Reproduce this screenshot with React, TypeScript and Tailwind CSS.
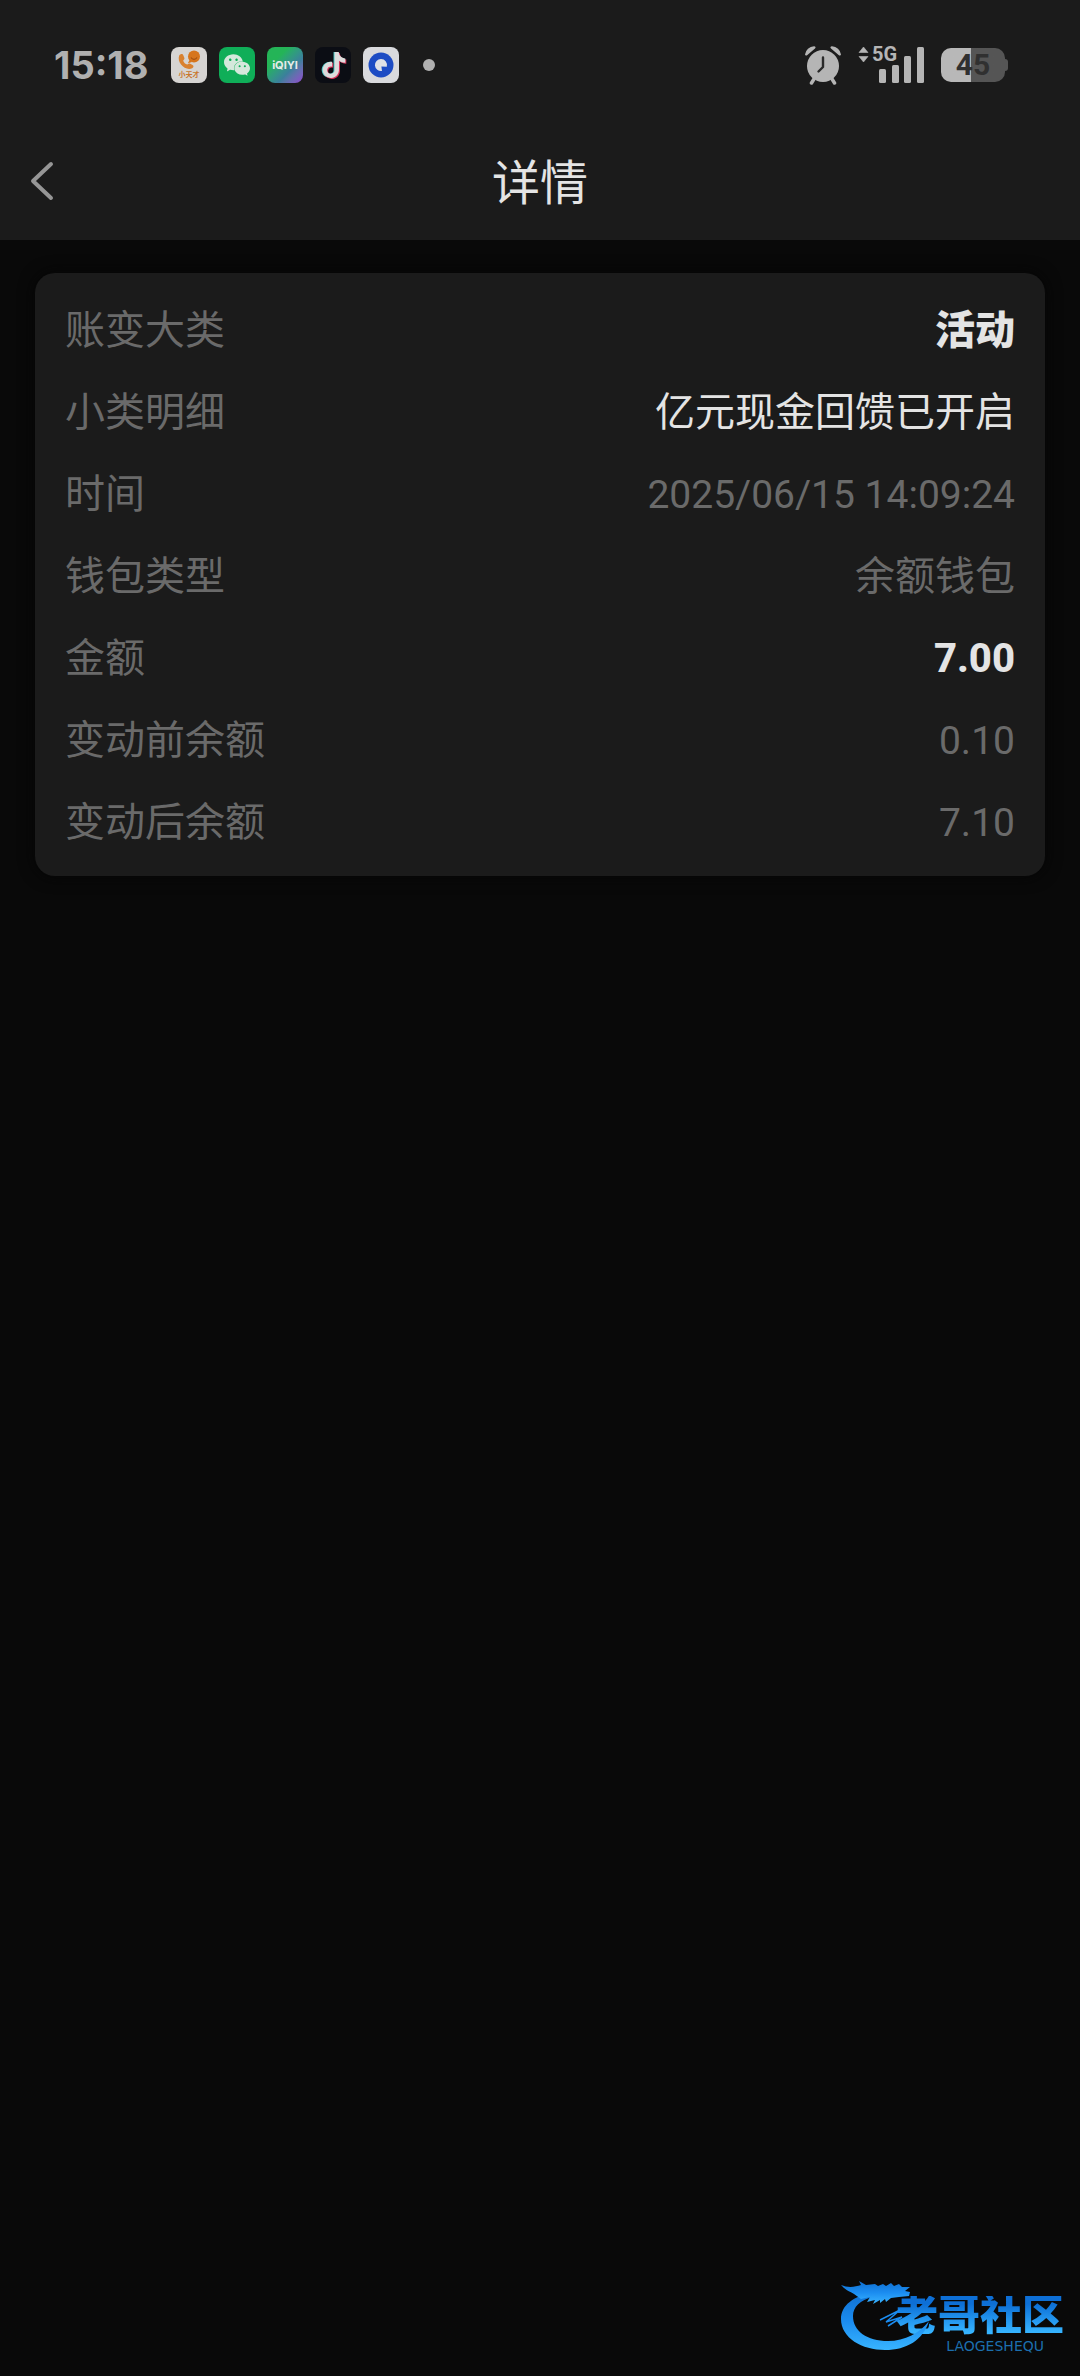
import { SiTiktok, SiWechat } from "react-icons/si";

type Row = { label: string; value: string; tone: string };

const muted = "text-[#6a6a6a]";
const rows: Row[] = [
  { label: "账变大类", value: "活动", tone: "font-black text-[#e4e4e4]" },
  { label: "小类明细", value: "亿元现金回馈已开启", tone: "text-[#e4e4e4]" },
  { label: "时间", value: "2025/06/15 14:09:24", tone: "text-[39px] text-[#6a6a6a]" },
  { label: "钱包类型", value: "余额钱包", tone: muted },
  { label: "金额", value: "7.00", tone: "font-extrabold text-[#e4e4e4]" },
  { label: "变动前余额", value: "0.10", tone: "text-[39px] text-[#6a6a6a]" },
  { label: "变动后余额", value: "7.10", tone: "text-[39px] text-[#6a6a6a]" },
];

function PhoneAppIcon() {
  return (
    <div className="relative size-9 overflow-hidden rounded-lg bg-[#d6d4d2]">
      <svg viewBox="0 0 36 36" className="size-9">
        <path
          d="M8.200 8.600c1.400-2 3.400-2 4.200-.2l1 2.600c.4 1.200-.8 1.900-1.200 2.700.6 1.900 2.200 3.400 4 3.900.9-.5 1.800-1.500 3-.9l2.400 1.300c1.400 1 1 2.400-.4 3.200-6.400 3.400-15.800-5.400-13-12.600z"
          fill="#d9812f"
        />
        <circle cx="23" cy="9.500" r="6" fill="#d6751c" />
        <path d="M18.600 13l-1.800 3.200 4.200-1.200z" fill="#d6751c" />
        <path d="M20 10.500c1.500 2.500 4.500 2.500 6 0" stroke="#a04f10" strokeWidth="1.200" fill="none" />
      </svg>
      <span className="absolute inset-x-0 bottom-1 text-center text-[7px] leading-[8px] font-bold text-[#c9762c]">
        小天才
      </span>
    </div>
  );
}

function TikTokIcon() {
  return (
    <div className="relative size-9 rounded-lg bg-[#0b0d14]">
      <SiTiktok className="absolute top-[5px] left-[5px] size-[26px] text-[#4fc9c6]" />
      <SiTiktok className="absolute top-[6px] left-[7px] size-[26px] text-[#d8345c]" />
      <SiTiktok className="absolute top-[5px] left-[6px] size-[26px] text-[#dcdcdc]" />
    </div>
  );
}

function AlarmIcon() {
  return (
    <svg viewBox="0 0 38 40" className="h-10 w-[38px]">
      <g fill="#b5b5b5">
        <path d="M1 9.500A9.500 9.500 0 0 1 10 1.200c1.800.2 2 1.500 1 2.200L3.400 9.900c-1 .9-2.300.8-2.400-.4z" />
        <path d="M37 9.500A9.500 9.500 0 0 0 28 1.200c-1.800.2-2 1.500-1 2.200l7.600 6.500c1 .9 2.300.8 2.400-.4z" />
        <circle cx="19" cy="21" r="16" />
      </g>
      <path d="M10 34l-2.500 4M28 34l2.500 4" stroke="#b5b5b5" strokeWidth="3.500" strokeLinecap="round" />
      <path d="M19 12.500v9.500l-4.500 4.500" stroke="#2a2a2a" strokeWidth="2.400" strokeLinecap="round" strokeLinejoin="round" fill="none" />
    </svg>
  );
}

function SignalIcon() {
  return (
    <div className="relative h-[38px] w-[67px]">
      <svg viewBox="0 0 67 38" className="h-[38px] w-[67px]" fill="#b5b5b5">
        <path d="M1 6.500L5.500 1 10 6.500zM1 10.500L5.500 16 10 10.500z" strokeLinejoin="round" stroke="#b5b5b5" strokeWidth=".6" />
        <rect x="21" y="23" width="7" height="14" rx="1.500" />
        <rect x="34" y="19" width="7" height="18" rx="1.500" />
        <rect x="46" y="10" width="7" height="27" rx="1.500" />
        <rect x="59" y="1" width="7" height="36" rx="1.500" />
      </svg>
      <span className="absolute top-0 left-[14px] text-xl leading-4 font-bold text-[#b5b5b5]">5G</span>
    </div>
  );
}

function Battery() {
  return (
    <div className="flex items-center">
      <div className="flex h-[34px] w-16 items-center justify-center rounded-[10px] bg-linear-to-r from-[#b8b8b8] from-47% to-[#555555] to-47% text-[30px] leading-none font-bold text-[#303030]">
        45
      </div>
      <div className="h-3 w-[3px] rounded-r-sm bg-[#555555]" />
    </div>
  );
}

function StatusBar() {
  return (
    <div className="flex h-[130px] items-center justify-between pr-[72px] pl-[54px]">
      <div className="flex items-center">
        <time className="w-[117px] font-[Inter] text-[38px] leading-none font-bold text-[#b0b0b0]">15:18</time>
        <div className="flex items-center gap-3">
          <PhoneAppIcon />
          <div className="flex size-9 items-center justify-center rounded-lg bg-[#0fae58]">
            <SiWechat className="size-[26px] text-[#d5e8dc]" />
          </div>
          <div className="flex size-9 items-center justify-center rounded-lg bg-linear-135 from-[#24b457] from-30% via-[#3b7f9c] via-65% to-[#8f45cf] font-[Inter] text-[11px] leading-none font-bold text-[#e6ece9]">
            iQIYI
          </div>
          <TikTokIcon />
          <div className="flex size-9 items-center justify-center rounded-lg bg-[#d9dadd]">
            <svg viewBox="0 0 26 26" className="size-[26px]">
              <circle cx="13" cy="13" r="12.500" fill="#1d4cc4" />
              <path d="M13 7a6 6 0 1 0 1 11.900l-.6-4.400 5.400.2A6 6 0 0 0 13 7z" fill="#dfe1e6" />
            </svg>
          </div>
        </div>
        <span className="ml-6 size-3 rounded-full bg-[#b0b0b0]" />
      </div>
      <div className="flex items-center gap-4">
        <AlarmIcon />
        <SignalIcon />
        <Battery />
      </div>
    </div>
  );
}

function Watermark() {
  return (
    <div className="absolute right-4 bottom-6 flex h-[74px] w-[224px] justify-end">
      <svg viewBox="0 0 92 74" className="absolute top-0 left-0 h-[74px] w-[92px]">
        <defs>
          <linearGradient id="dragon" x1="0" y1="0" x2="0" y2="1">
            <stop offset="0" stopColor="#0f6fd0" />
            <stop offset=".5" stopColor="#1b8cf0" />
            <stop offset="1" stopColor="#38b4ff" />
          </linearGradient>
        </defs>
        <g fill="url(#dragon)">
          <path d="M32 15C14 18 1 27 1 41 1 60 22 72 45 72 67 72 83 62 89 43 80 55 65 63 48 63 27 63 13 53 13 38 13 29 20 22 33 19z" />
          <path d="M1 7c7 3 14 2 20 0L19 3l7 4 9-1 3 2 5-2 3 2 5-3 3 3 5-2 3 3 8 0-5 4 5 1-1 4-10 1-8 1-5 4-1-3-5 4 0-3-7 4 2-4-8 2 3-5-9 2-7-5C11 14 5 12 1 7z" />
        </g>
        <path d="M40 42l20-10-14 12 16-5-14 9" stroke="#1b8cf0" strokeWidth="1.500" fill="none" />
      </svg>
      <div className="flex flex-col items-end gap-1 pt-[18px]">
        <span className="bg-linear-to-b from-[#0d6fd6] from-20% to-[#36b3ff] to-90% bg-clip-text text-[42px] leading-10 font-black text-transparent">
          老哥社区
        </span>
        <span className="pr-5 font-['DejaVu_Sans'] text-sm leading-3 text-[#1c6fae]">LAOGESHEQU</span>
      </div>
    </div>
  );
}

export default function App() {
  return (
    <div className="relative min-h-screen bg-[#090909] font-[Roboto,'Noto_Sans_CJK_SC',sans-serif]" lang="zh-CN">
      <header className="bg-[#1b1b1b]">
        <StatusBar />
        <div className="grid h-[110px] grid-cols-3 items-center px-6 pb-1">
          <button type="button" aria-label="返回" className="flex size-12 items-start">
            <svg viewBox="0 0 36 44" className="h-11 w-9" fill="none" stroke="#969696" strokeWidth="4" strokeLinecap="round" strokeLinejoin="round">
              <path d="M27 5L9 22l18 17" />
            </svg>
          </button>
          <h1 className="pt-[2px] text-center text-5xl leading-none text-[#e4e4e4]">详情</h1>
        </div>
      </header>
      <main className="px-[35px] pt-[33px]">
        <dl className="rounded-[20px] bg-[#1b1b1b] px-[30px] pt-[17px] pb-3 text-[40px] leading-[82px] shadow-[0_0_16px_#050505]">
          {rows.map((row) => (
            <div key={row.label} className="flex justify-between">
              <dt className={muted}>{row.label}</dt>
              <dd className={row.tone}>{row.value}</dd>
            </div>
          ))}
        </dl>
      </main>
      <Watermark />
    </div>
  );
}
